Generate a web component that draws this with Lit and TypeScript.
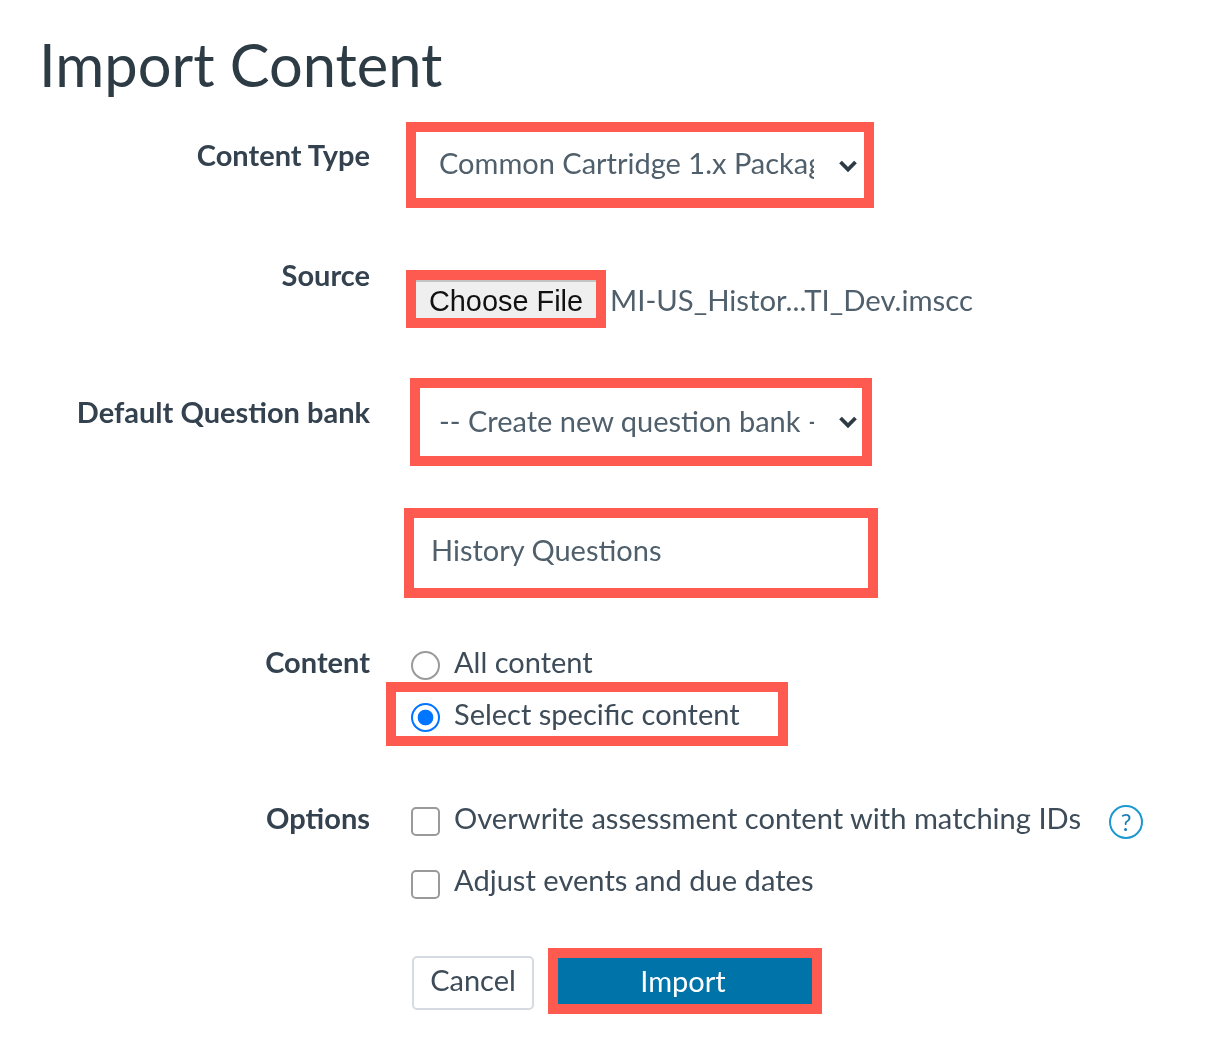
import { LitElement, html, css } from "lit";
import { customElement } from "lit/decorators.js";

const chevron = html`<svg class="chev" viewBox="0 0 20 14" width="20" height="14" aria-hidden="true"><path d="M2.5 3 L10 10.5 L17.5 3" fill="none" stroke="#2d3b45" stroke-width="3.8"/></svg>`;

@customElement("app-root")
export class AppRoot extends LitElement {
  static styles = css`
    :host {
      display: block;
      width: 1232px;
      height: 1046px;
      background: #fff;
      color: #2d3b45;
      font-family: Lato, "Liberation Sans", sans-serif;
      font-size: 29px;
      overflow: hidden;
    }
    .page { filter: blur(0.6px); }
    h1 {
      margin: 0;
      height: 122px;
      box-sizing: border-box;
      padding: 26px 0 0 39px;
      font-size: 59.6px;
      line-height: 76px;
      font-weight: 400;
    }
    .row {
      display: grid;
      grid-template-columns: 370px 1fr;
      align-items: start;
    }
    .lbl {
      text-align: right;
      font-weight: 700;
      font-size: 29px;
      line-height: 36px;
      color: #344250;
    }
    .r1 { height: 86px; }
    .r1 .lbl { padding-top: 15px; }
    .r2 { height: 58px; margin-top: 62px; }
    .r2 .lbl { margin-top: -13px; }
    .r3 { height: 88px; margin-top: 50px; }
    .r3 .lbl { padding-top: 16px; }
    .r4 { height: 90px; margin-top: 42px; }
    .r5 { margin-top: 48px; height: 100px; }
    .r5 .lbl { margin-top: -2px; }
    .r6 { margin-top: 56px; }
    .r6 .lbl { margin-top: -2px; }
    .r7 { margin-top: 49px; }

    .selwrap { position: relative; display: block; }
    select {
      appearance: none;
      display: block;
      box-sizing: border-box;
      border: 10px solid #ff5a4f;
      border-radius: 0;
      background: #fff;
      color: #4f5f6b;
      font: 400 29px Lato, sans-serif;
      outline: none;
    }
    .s1 { margin-left: 36px; width: 468px; height: 86px; padding: 0 50px 6px 23px; }
    .s3 { margin-left: 40px; width: 462px; height: 88px; padding: 0 48px 4px 19px; }
    .chev { position: absolute; top: 37px; }
    .s1 + .chev { left: 468px; }
    .s3 + .chev { left: 468px; }

    .file { display: flex; align-items: center; margin-left: 36px; }
    .filebtn {
      box-sizing: border-box;
      width: 200px;
      height: 58px;
      padding: 4px 0 0;
      border: 10px solid #ff5a4f;
      background: #efefef;
      box-shadow: inset 0 2px 0 #c4c4c4;
      color: #111;
      font: 400 28.9px "Liberation Sans", Arial, sans-serif;
    }
    .fname { margin-left: 4px; color: #4f5f6b; font-size: 29.3px; }

    input[type="text"] {
      display: block;
      box-sizing: border-box;
      margin-left: 34px;
      width: 474px;
      height: 90px;
      border: 10px solid #ff5a4f;
      border-radius: 0;
      padding: 0 0 8px 17px;
      font: 400 29px Lato, sans-serif;
      color: #4f5f6b;
      outline: none;
    }

    .mark {
      appearance: none;
      box-sizing: border-box;
      width: 29px;
      height: 29px;
      flex: none;
      margin: 0 14px 0 -1px;
      border: 2.5px solid #9a9a9a;
      background: #fff;
    }
    .check { border-radius: 5px; }
    .radio { border-radius: 50%; }
    .radio:checked {
      border: 2.5px solid #0075ff;
      background: radial-gradient(circle, #0075ff 0 7.5px, #fff 8.2px);
    }

    .opts { display: flex; flex-direction: column; margin-left: 42px; }
    .opt { display: flex; align-items: flex-start; line-height: 36px; color: #3d4c58; }
    .opts .opt { font-size: 29.1px; }
    .opt .mark { margin-top: 5px; }
    .opt span.t { margin-top: -2px; }
    .opt.second span.t { margin-top: -3px; }
    .group { margin-left: 16px; }
    .allrow { margin-left: 26px; height: 36px; }
    .chosen {
      box-sizing: border-box;
      width: 402px;
      height: 64px;
      border: 10px solid #ff5a4f;
      padding-left: 16px;
      display: flex;
      align-items: center;
      color: #3d4c58;
    }
    .chosen .mark { margin-top: 6px; }
    .chosen span { margin-top: 1px; position: relative; top: -1px; }

    .help {
      box-sizing: border-box;
      width: 34px;
      height: 34px;
      margin: 3px 0 0 28px;
      border: 2.5px solid #1b98d0;
      border-radius: 50%;
      color: #1b7fb5;
      font-size: 24px;
      line-height: 29px;
      text-align: center;
      flex: none;
    }
    .gap { margin-top: 26px; }

    .actions { display: flex; align-items: flex-start; margin-left: 42px; }
    .cancel {
      box-sizing: border-box;
      width: 122px;
      height: 54px;
      margin: 8px 0 0;
      border: 2px solid #d5dbe0;
      border-radius: 5px;
      background: #fff;
      color: #3d4c58;
      font: 400 29px Lato, sans-serif;
      padding: 0 0 7px;
    }
    .import {
      box-sizing: border-box;
      width: 274px;
      height: 66px;
      margin-left: 14px;
      border: 10px solid #ff5a4f;
      background: #0073a8;
      color: #fff;
      font: 400 29px Lato, sans-serif;
      padding: 0 4px 2px 0;
    }
  `;

  render() {
    return html`
      <div class="page">
        <h1>Import Content</h1>

        <div class="row r1">
          <div class="lbl">Content Type</div>
          <div class="selwrap">
            <select class="s1"><option>Common Cartridge 1.x Package</option></select>
            ${chevron}
          </div>
        </div>

        <div class="row r2">
          <div class="lbl">Source</div>
          <div class="file">
            <button class="filebtn">Choose File</button>
            <span class="fname">MI-US_Histor...TI_Dev.imscc</span>
          </div>
        </div>

        <div class="row r3">
          <div class="lbl">Default Question bank</div>
          <div class="selwrap">
            <select class="s3"><option>-- Create new question bank --</option></select>
            ${chevron}
          </div>
        </div>

        <div class="row r4">
          <div></div>
          <input type="text" value="History Questions" />
        </div>

        <div class="row r5">
          <div class="lbl">Content</div>
          <div class="group">
            <label class="opt allrow"><input class="mark radio" type="radio" name="c" /><span class="t">All content</span></label>
            <label class="chosen"><input class="mark radio" type="radio" name="c" checked /><span>Select specific content</span></label>
          </div>
        </div>

        <div class="row r6">
          <div class="lbl">Options</div>
          <div class="opts">
            <div class="opt">
              <label class="opt"><input class="mark check" type="checkbox" /><span class="t">Overwrite assessment content with matching IDs</span></label>
              <span class="help">?</span>
            </div>
            <label class="opt second gap"><input class="mark check" type="checkbox" /><span class="t">Adjust events and due dates</span></label>
          </div>
        </div>

        <div class="row r7">
          <div></div>
          <div class="actions">
            <button class="cancel">Cancel</button>
            <button class="import">Import</button>
          </div>
        </div>
      </div>
    `;
  }
}
